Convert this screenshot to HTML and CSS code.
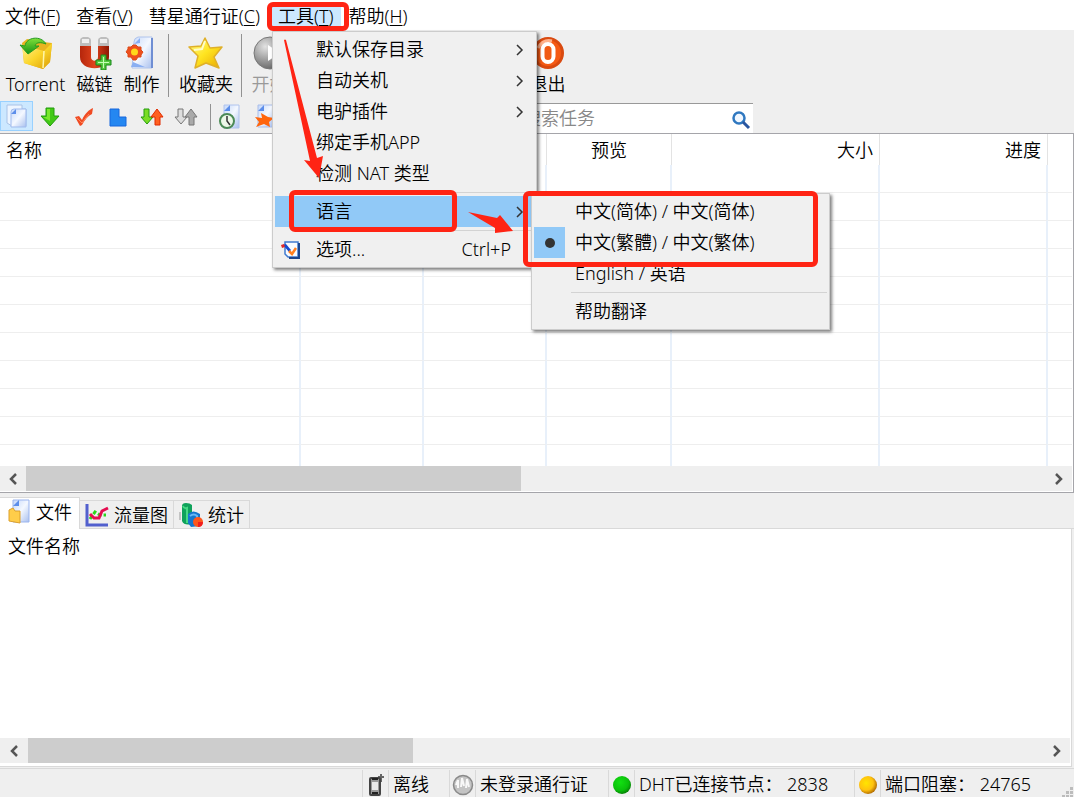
FILE: index.html
```html
<!DOCTYPE html>
<html lang="zh-CN">
<head>
<meta charset="utf-8">
<title>BitComet</title>
<link rel="stylesheet" href="styles.css">
</head>
<body>
<svg class="defs" aria-hidden="true">
  <defs>
    <linearGradient id="folder" x1="0" y1="0" x2="1" y2="1"><stop offset="0" stop-color="#fff2a0"/><stop offset=".5" stop-color="#fbd62c"/><stop offset="1" stop-color="#d99a05"/></linearGradient>
    <linearGradient id="paper" x1="0" y1="0" x2="1" y2="1"><stop offset="0" stop-color="#c5d8fa"/><stop offset=".5" stop-color="#f4f8ff"/><stop offset="1" stop-color="#a9c0ee"/></linearGradient>
    <linearGradient id="red" x1="0" y1="0" x2="1" y2="0"><stop offset="0" stop-color="#b5260c"/><stop offset=".5" stop-color="#e0431c"/><stop offset="1" stop-color="#8d1703"/></linearGradient>
    <linearGradient id="green" x1="0" y1="0" x2="0" y2="1"><stop offset="0" stop-color="#80df3a"/><stop offset="1" stop-color="#159414"/></linearGradient>
    <linearGradient id="star" x1="0" y1="0" x2="1" y2="1"><stop offset="0" stop-color="#fffb9c"/><stop offset=".5" stop-color="#ffe420"/><stop offset="1" stop-color="#e8a700"/></linearGradient>
    <radialGradient id="grey" cx=".35" cy=".3" r=".7"><stop offset="0" stop-color="#e2e2e2"/><stop offset="1" stop-color="#6e6e6e"/></radialGradient>
    <radialGradient id="lamp-green" cx=".4" cy=".35" r=".65"><stop offset="0" stop-color="#12e012"/><stop offset=".7" stop-color="#0ac00a"/><stop offset="1" stop-color="#078507"/></radialGradient>
    <radialGradient id="lamp-yellow" cx=".4" cy=".4" r=".65"><stop offset="0" stop-color="#ffe500"/><stop offset=".6" stop-color="#ffc20e"/><stop offset="1" stop-color="#a86200"/></radialGradient>
  </defs>
</svg>
<div class="app">
  <nav class="menubar">
    <button class="menubar-item">文件(<u>F</u>)</button>
    <button class="menubar-item">查看(<u>V</u>)</button>
    <button class="menubar-item">彗星通行证(<u>C</u>)</button>
    <button class="menubar-item open">工具(<u>T</u>)</button>
    <button class="menubar-item">帮助(<u>H</u>)</button>
  </nav>

  <div class="toolbar">
    <div class="tools">
      <button class="tool wide">
        <svg width="34" height="34" viewBox="0 0 34 34"><path d="M3 7l5-4 6 1 10 2 9 1-2 19-7 7L5 27z" fill="#e8b422"/><path d="M3 9l22 6 8-8-2 19-7 7L5 27z" fill="url(#folder)"/><path d="M25 15l-1 17" fill="none" stroke="#fff6aa" stroke-width="1.5"/><path d="M1 9l5 1C7 1 22-1 27 8c-5-2-10-2-11 2h4l-11 8z" fill="url(#green)" stroke="#259a20"/></svg>
        <span>Torrent</span></button>
      <button class="tool">
        <svg width="34" height="34" viewBox="0 0 34 34"><path d="M2 9h11v12c0 5 7 5 7 0V9h11v12c0 15-29 15-29 0z" fill="url(#red)"/><path d="M2 10V4q0-2 3-3h5q3 1 3 3v6zM20 10V4q0-2 3-3h5q3 1 3 3v6z" fill="#bdbdbd"/><path d="M4 7V3h7v4zM22 7V3h7v4z" fill="#eee"/><path d="M23 19h5v5h5v5h-5v5h-5v-5h-5v-5h5z" fill="#54c840" stroke="#178819"/><path d="M25.500 21v11M20 26.500h11" stroke="#c2ffb5"/></svg>
        <span>磁链</span></button>
      <button class="tool">
        <svg width="34" height="34" viewBox="0 0 34 34"><path d="M9 6q0-4 4-5h14v31H7z" fill="url(#paper)" stroke="#b0c4ec"/><path d="M9 8l6-6v5zM8 26l12 5H6z" fill="#8aaff2"/><path d="M27 2v30" stroke="#6f8ed3" stroke-width="2"/><path d="M8 9h3l2 2 3 0v3l2 2-2 3v2h-3l-2 3H8l-2-3H3v-3l-2-2 2-3v-2h3z" fill="#ee4f1d" stroke="#dc4a18"/><circle cx="9.500" cy="16" r="3.500" fill="#ffd91b"/></svg>
        <span>制作</span></button>
      <i class="rule"></i>
      <button class="tool favorite">
        <svg width="36" height="34" viewBox="0 0 36 34"><path d="M17 2l5 10 12-1-8 10 5 11-13-5-11 5 3-12-9-9 12-1z" fill="url(#star)" stroke="#dfb02a" stroke-width="1.500" stroke-linejoin="round"/><path d="M17 5l-3 8-8 1" fill="none" stroke="#fffcc9" stroke-width="2"/></svg>
        <span>收藏夹</span></button>
      <i class="rule"></i>
      <button class="tool start" disabled>
        <svg width="34" height="34" viewBox="0 0 34 34"><circle cx="17" cy="17" r="16" fill="url(#grey)" stroke="#777"/><path d="M15 9l12 8-12 8z" fill="#fff"/></svg>
        <span>开始</span></button>
      <button class="tool exit">
        <svg width="34" height="34" viewBox="0 0 34 34"><circle cx="17" cy="17" r="14.500" fill="#f55a14" stroke="#d94a10" stroke-width="3"/><path d="M7 12q5-9 14-7" fill="none" stroke="#ffb28c" stroke-width="3"/><rect x="11.500" y="8" width="11" height="18" rx="5.500" fill="#f15a14" stroke="#fff" stroke-width="4"/></svg>
        <span>退出</span></button>
    </div>
    <div class="filters">
      <button class="filter active" aria-label="全部"><svg width="24" height="26" viewBox="0 0 24 26"><path d="M2 2h15v4h4v17H7l-5-3z" fill="#edf5ff" stroke="#a9c2e6"/><path d="M6 9q0-3 3-3h12v18H6z" fill="url(#paper)" stroke="#a0bbee"/><path d="M6 11l5-5v5z" fill="#5d8eea"/></svg></button>
      <button class="filter" aria-label="下载"><svg width="20" height="20" viewBox="0 0 20 20"><path d="M6 1h8v8h5l-9 10L1 9h5z" fill="#42c916" stroke="#239c0d"/><path d="M7 2h3v12L3 10h4z" fill="#79e72c"/></svg></button>
      <button class="filter" aria-label="完成"><svg width="20" height="20" viewBox="0 0 20 20"><path d="M1 10l4-1 3 4C11 6 15 3 19 1l-1 6q-6 3-10 11l-2 1z" fill="#f04b23"/><path d="M3 11l5 5 7-9" fill="none" stroke="#ff875b"/></svg></button>
      <button class="filter" aria-label="未完成"><svg width="18" height="20" viewBox="0 0 18 20"><path d="M1 2h9v8h7v9H1z" fill="#2487f1" stroke="#1666dc"/></svg></button>
      <button class="filter" aria-label="活动"><svg width="24" height="20" viewBox="0 0 24 20"><path d="M4 2h5v8h4l-6 7-6-7h3z" fill="#79dd24" stroke="#259b0e"/><path d="M15 18h5v-8h3l-6-8-6 8h4z" fill="#ff6120" stroke="#e02a00"/></svg></button>
      <button class="filter" aria-label="非活动"><svg width="24" height="20" viewBox="0 0 24 20"><path d="M4 2h5v8h4l-6 7-6-7h3z" fill="#ddd" stroke="#777"/><path d="M15 18h5v-8h3l-6-8-6 8h4z" fill="#aaa" stroke="#777"/></svg></button>
      <i class="rule"></i>
      <button class="filter" aria-label="计划"><svg width="24" height="26" viewBox="0 0 24 26"><path d="M6 1h15v23H6z" fill="url(#paper)" stroke="#b0c4ee"/><path d="M6 7l6-6v6z" fill="#5d8eea"/><circle cx="9" cy="17" r="7" fill="#edf8e8" stroke="#4c8a56" stroke-width="2"/><path d="M9 12v5l3 4" fill="none" stroke="#333" stroke-width="1.500"/></svg></button>
      <button class="filter" aria-label="制作"><svg width="22" height="26" viewBox="0 0 22 26"><path d="M5 1h15v22H5z" fill="url(#paper)" stroke="#a9bde9"/><path d="M5 7l6-6v6z" fill="#5d8eea"/><path d="M8 9l7 4 6 1-5 4 1 5-6-3-8 3 3-5-4-5 7 1z" fill="#ff650d"/></svg></button>
      <label class="search"><input type="text" placeholder="搜索任务" aria-label="搜索任务">
        <svg width="20" height="20" viewBox="0 0 20 20"><circle cx="8" cy="8" r="5.500" fill="#f0f7ff" stroke="#2f78c0" stroke-width="2.500"/><path d="M12 12l6 6" stroke="#2a56a0" stroke-width="3"/></svg></label>
    </div>
  </div>

  <main class="tasks">
    <table>
      <colgroup><col class="c-name"><col class="c-mid"><col class="c-mid"><col class="c-preview"><col class="c-size"><col class="c-progress"><col></colgroup>
      <thead><tr><th>名称</th><th></th><th></th><th class="center">预览</th><th class="right">大小</th><th class="right">进度</th><th></th></tr></thead>
      <tbody>
        <tr><td></td><td></td><td></td><td></td><td></td><td></td><td></td></tr>
        <tr><td></td><td></td><td></td><td></td><td></td><td></td><td></td></tr>
        <tr><td></td><td></td><td></td><td></td><td></td><td></td><td></td></tr>
        <tr><td></td><td></td><td></td><td></td><td></td><td></td><td></td></tr>
        <tr><td></td><td></td><td></td><td></td><td></td><td></td><td></td></tr>
        <tr><td></td><td></td><td></td><td></td><td></td><td></td><td></td></tr>
        <tr><td></td><td></td><td></td><td></td><td></td><td></td><td></td></tr>
        <tr><td></td><td></td><td></td><td></td><td></td><td></td><td></td></tr>
        <tr><td></td><td></td><td></td><td></td><td></td><td></td><td></td></tr>
        <tr><td></td><td></td><td></td><td></td><td></td><td></td><td></td></tr>
        <tr class="last"><td></td><td></td><td></td><td></td><td></td><td></td><td></td></tr>
      </tbody>
    </table>
    <div class="scroll">
      <button aria-label="向左"><svg width="10" height="12" viewBox="0 0 10 12"><path d="M8 1L3 6l5 5" fill="none" stroke="#555" stroke-width="2.500"/></svg></button>
      <div class="track"><div class="thumb" style="width:48.500%"></div></div>
      <button aria-label="向右"><svg width="10" height="12" viewBox="0 0 10 12"><path d="M2 1l5 5-5 5" fill="none" stroke="#555" stroke-width="2.500"/></svg></button>
    </div>
  </main>

  <div class="tabs">
    <button class="tab current"><svg width="22" height="26" viewBox="0 0 22 26"><path d="M5 1h16v22H5z" fill="url(#paper)" stroke="#9bb5ef"/><path d="M5 7l6-6v6z" fill="#5d8eea"/><path d="M1 11l4-2 2 3h5v12l-11-2z" fill="#ffcd4a" stroke="#dda12d"/></svg>文件</button>
    <button class="tab"><svg width="24" height="24" viewBox="0 0 24 24"><path d="M2 1v21h21" fill="none" stroke="#5260ce" stroke-width="3"/><path d="M5 16l5-7 5 3 6 0" fill="none" stroke="#2bd51b" stroke-width="3" stroke-dasharray="4 2"/><path d="M5 11l4 4h5l3-7 6-3" fill="none" stroke="#e50c50" stroke-width="3"/></svg>流量图</button>
    <button class="tab"><svg width="24" height="26" viewBox="0 0 24 26"><path d="M1 10v8" stroke="#999"/><path d="M3 4q0-3 4-3t6 2v19q-8 2-10-3z" fill="#0fa25b"/><path d="M4 4q1 3 4 2v15" fill="none" stroke="#46d985" stroke-width="2"/><path d="M9 12q5-5 12 0v12l-9 1-3-4z" fill="#1677cd"/><path d="M11 14q4-3 7 0v5" fill="none" stroke="#68b9f6" stroke-width="2"/><circle cx="19" cy="20" r="5" fill="#ff561b"/><path d="M19 20h5q0 5-5 5z" fill="#f11e1e"/></svg>统计</button>
  </div>
  <section class="details">
    <div class="details-head">文件名称</div>
    <div class="scroll">
      <button class="start-arrow" aria-label="向左"><svg width="10" height="12" viewBox="0 0 10 12"><path d="M8 1L3 6l5 5" fill="none" stroke="#555" stroke-width="2.500"/></svg></button>
      <div class="track"><div class="thumb" style="width:37.900%"></div></div>
      <button aria-label="向右"><svg width="10" height="12" viewBox="0 0 10 12"><path d="M2 1l5 5-5 5" fill="none" stroke="#555" stroke-width="2.500"/></svg></button>
    </div>
  </section>

  <footer class="status">
    <span class="lamp"><svg width="18" height="24" viewBox="0 0 18 24"><path d="M14 1v8M11 4h6" stroke="#666" stroke-width="2"/><rect x="3" y="5" width="10" height="17" rx="1" fill="#999" stroke="#444" stroke-width="2"/><path d="M5 9h6v8H5z" fill="#e8e8e8"/><path d="M5 6h6M5 20h6" stroke="#222" stroke-width="2"/></svg></span><span class="state offline">离线</span>
    <span class="lamp"><svg width="22" height="22" viewBox="0 0 22 22"><circle cx="11" cy="11" r="9.500" fill="#c4c4c4" stroke="#8a8a8a" stroke-width="1.500"/><path d="M4 11l2-5v8M9 13l1-9 2 8M14 14l1-9 2 8" fill="none" stroke="#f8f8f8" stroke-width="2"/></svg></span><span class="state passport">未登录通行证</span>
    <span class="lamp"><svg width="20" height="20" viewBox="0 0 20 20"><circle cx="10" cy="10" r="9" fill="url(#lamp-green)"/></svg></span><span class="state dht">DHT已连接节点： 2838</span>
    <span class="lamp"><svg width="20" height="20" viewBox="0 0 20 20"><circle cx="10" cy="10" r="9" fill="url(#lamp-yellow)"/></svg></span><span class="state port">端口阻塞： 24765<svg class="grip" width="12" height="12" viewBox="0 0 12 12"><path d="M8 0h3v3H8zM4 4h3v3H4zM8 4h3v3H8zM0 8h3v3H0zM4 8h3v3H4zM8 8h3v3H8z" fill="#bcbcbc"/></svg></span>
  </footer>

  <div class="menu tools-menu" role="menu">
    <button class="menu-item" role="menuitem"><i></i><span>默认保存目录</span><svg class="chevron" width="8" height="12" viewBox="0 0 8 12"><path d="M1 1l5 5-5 5"/></svg></button>
    <button class="menu-item" role="menuitem"><i></i><span>自动关机</span><svg class="chevron" width="8" height="12" viewBox="0 0 8 12"><path d="M1 1l5 5-5 5"/></svg></button>
    <button class="menu-item" role="menuitem"><i></i><span>电驴插件</span><svg class="chevron" width="8" height="12" viewBox="0 0 8 12"><path d="M1 1l5 5-5 5"/></svg></button>
    <button class="menu-item" role="menuitem"><i></i><span>绑定手机APP</span></button>
    <button class="menu-item" role="menuitem"><i></i><span>检测 NAT 类型</span></button>
    <hr>
    <button class="menu-item hover" role="menuitem"><i></i><span>语言</span><svg class="chevron" width="8" height="12" viewBox="0 0 8 12"><path d="M1 1l5 5-5 5"/></svg></button>
    <hr>
    <button class="menu-item" role="menuitem"><i><svg width="20" height="20" viewBox="0 0 20 20"><path d="M4 2h13v15H7l-3-3z" fill="#f8fbff" stroke="#3f7ad0" stroke-width="1.500"/><path d="M18 3v15H8" fill="none" stroke="#1b458e" stroke-width="2"/><path d="M2 5l3-1 5 6-2 2z" fill="#1649ce"/><path d="M0 5l3-1 1 3-3 1z" fill="#e12b27"/><path d="M8 11l3 3 4-6" fill="none" stroke="#ff7f20" stroke-width="2.500"/></svg></i><span>选项...</span><kbd>Ctrl+P</kbd></button>
  </div>
  <div class="menu language-menu" role="menu">
    <button class="menu-item" role="menuitemradio" aria-checked="false"><i></i><span>中文(简体) / 中文(简体)</span></button>
    <button class="menu-item" role="menuitemradio" aria-checked="true"><i class="checked"></i><span>中文(繁體) / 中文(繁体)</span></button>
    <button class="menu-item" role="menuitemradio" aria-checked="false"><i></i><span>English / 英语</span></button>
    <hr>
    <button class="menu-item" role="menuitem"><i></i><span>帮助翻译</span></button>
  </div>

  <svg class="marks" width="560" height="270" viewBox="0 0 560 270" aria-hidden="true"><path d="M284 40q1-1 2 0l31 118 6-2-4 22-15-18 6 1z" fill="#ff2414"/><path d="M468 212l29 6 3-3 13 16-18 2 0-5z" fill="#ff2414"/></svg>
  <div class="mark mark-tools"></div>
  <div class="mark mark-language"></div>
  <div class="mark mark-chinese"></div>
</div>
</body>
</html>
```
FILE: styles.css
```css
* { box-sizing: border-box; }
body {
  margin: 0;
  font: 350 18px/24px "Noto Sans", "Noto Sans CJK SC", sans-serif;
  color: #000;
}
button, input {
  font: inherit;
  color: inherit;
  border: 0;
  padding: 0;
  margin: 0;
  background: none;
}
svg { display: block; flex: none; }
.defs { position: absolute; width: 0; height: 0; }
.app {
  position: relative;
  display: flex;
  flex-direction: column;
  min-height: 100vh;
  background: #efefef;
  overflow: hidden;
}

.menubar { display: flex; height: 30px; padding: 4px 0 2px; background: #fff; }
.menubar-item { padding: 0 11px 0 5px; white-space: nowrap; }
.menubar-item u { text-decoration-thickness: 1px; text-underline-offset: 2px; }
.menubar-item.open { background: #cce8ff; padding: 0 7px; margin-right: 3px; }

.tools { display: flex; height: 71px; padding-top: 4px; }
.tool {
  display: flex;
  flex-direction: column;
  align-items: center;
  justify-content: flex-start;
  gap: 2px;
  width: 47px;
  padding-top: 2px;
  white-space: nowrap;
}
.tool.wide { width: 71px; }
.tool.favorite { width: 70px; margin-left: 2px; }
.tool.start { margin-left: 4px; color: #999; }
.tool.exit { margin-left: 231px; }
.rule { width: 1px; height: 63px; background: #929292; margin-left: 3px; }
.favorite + .rule { margin-left: 0; }
.filters { display: flex; align-items: stretch; height: 32px; padding-bottom: 2px; }
.filter { display: flex; align-items: center; justify-content: center; width: 34px; padding-top: 2px; }
.filter.active { width: 33px; padding-top: 0; background: #cce8ff; border: 1px solid #99d1ff; }
.filters .rule { height: auto; margin: 3px 2px 1px 7px; }
.search {
  display: flex;
  align-items: center;
  width: 238px;
  height: 30px;
  margin-left: 234px;
  margin-top: 2px;
  padding: 0 2px 2px 8px;
  background: #fff;
  border-top: 1px solid #999;
}
.search svg { margin-top: 4px; }
.search input { flex: 1; min-width: 0; height: 24px; outline: 0; }
.search input::placeholder { color: #888; opacity: 1; }

.tasks { border: 1px solid #a5a5aa; border-left: 0; background: #fff; padding: 0 1px 1px 0; }
table { width: 100%; table-layout: fixed; border-spacing: 0; }
.c-name { width: 301px; }
.c-mid { width: 123px; }
.c-preview { width: 125px; }
.c-size { width: 208px; }
.c-progress { width: 168px; }
th { height: 31px; padding: 1px 6px 0; text-align: left; font-weight: 350; border-right: 1px solid #e3e3e3; }
th.center { text-align: center; }
th.right { text-align: right; }
td { height: 28px; padding: 0; border-right: 2px solid #e8f0fa; border-bottom: 1px solid #eee; }
.last td { height: 21px; border-bottom: 0; }
th:last-child, td:last-child { border-right: 0; }
.scroll { display: flex; height: 25px; background: #efefef; }
.scroll button { display: grid; place-items: center; width: 26px; }
.scroll .start-arrow { width: 28px; }
.track { flex: 1; display: flex; }
.thumb { background: #cdcdcd; }

.tabs { display: flex; align-items: flex-end; height: 36px; border-bottom: 1px solid #d9d9d9; }
.tab {
  display: flex;
  align-items: center;
  gap: 5px;
  height: 28px;
  padding: 0 5px;
  border: 1px solid #d9d9d9;
  border-width: 1px 1px 0 0;
  white-space: nowrap;
}
.tab.current { height: 32px; margin-bottom: -1px; padding: 0 7px 3px 8px; gap: 6px; background: #fff; }
.details {
  flex: 1;
  display: flex;
  flex-direction: column;
  justify-content: space-between;
  min-height: 238px;
  margin-right: 2px;
  padding: 5px 1px 3px 0;
  border: 1px solid #d9d9d9;
  border-width: 0 1px 1px 0;
  background: #fff;
}
.details-head { padding: 0 8px; }

.status { display: flex; justify-content: flex-end; height: 31px; margin-top: 1px; padding-top: 1px; border-top: 1px solid #d9d9d9; }
.lamp { display: grid; place-items: center; width: 26px; border-left: 1px solid #d9d9d9; }
.state { position: relative; padding: 2px 4px 0; border-left: 1px solid #d9d9d9; white-space: nowrap; }
.offline { width: 61px; }
.passport { width: 133px; }
.dht { width: 220px; }
.port { width: 194px; }
.grip { position: absolute; right: 0; bottom: 0; }

.menu {
  position: absolute;
  padding: 2px;
  background: #f0f0f0;
  border: 1px solid #ccc;
  box-shadow: 2px 2px 3px rgba(0, 0, 0, .5);
}
.tools-menu { left: 272px; top: 31px; width: 265px; }
.language-menu { left: 531px; top: 193px; width: 299px; }
.menu-item { display: flex; align-items: center; width: 100%; height: 31px; padding-right: 10px; text-align: left; white-space: nowrap; }
.menu-item i { display: grid; place-items: center; width: 31px; height: 31px; margin-right: 10px; }
.menu-item span { flex: 1; }
.menu-item span, .menu-item kbd { padding-bottom: 2px; }
.menu-item kbd { font: inherit; padding-right: 13px; }
.menu-item.hover, .menu-item .checked { background: #91c9f7; }
.checked::before { content: ""; width: 10px; height: 10px; border-radius: 50%; background: #333; }
.chevron { fill: none; stroke: #333; stroke-width: 1.5; }
.menu hr { height: 1px; margin: 3px 0 3px 37px; border: 0; background: #d3d3d3; }

.marks { position: absolute; left: 0; top: 0; pointer-events: none; }
.mark { position: absolute; border: 5px solid #ff2414; border-radius: 6px; pointer-events: none; }
.mark-tools { left: 267px; top: 2px; width: 82px; height: 29px; }
.mark-language { left: 289px; top: 190px; width: 168px; height: 42px; }
.mark-chinese { left: 523px; top: 191px; width: 295px; height: 76px; }
```
